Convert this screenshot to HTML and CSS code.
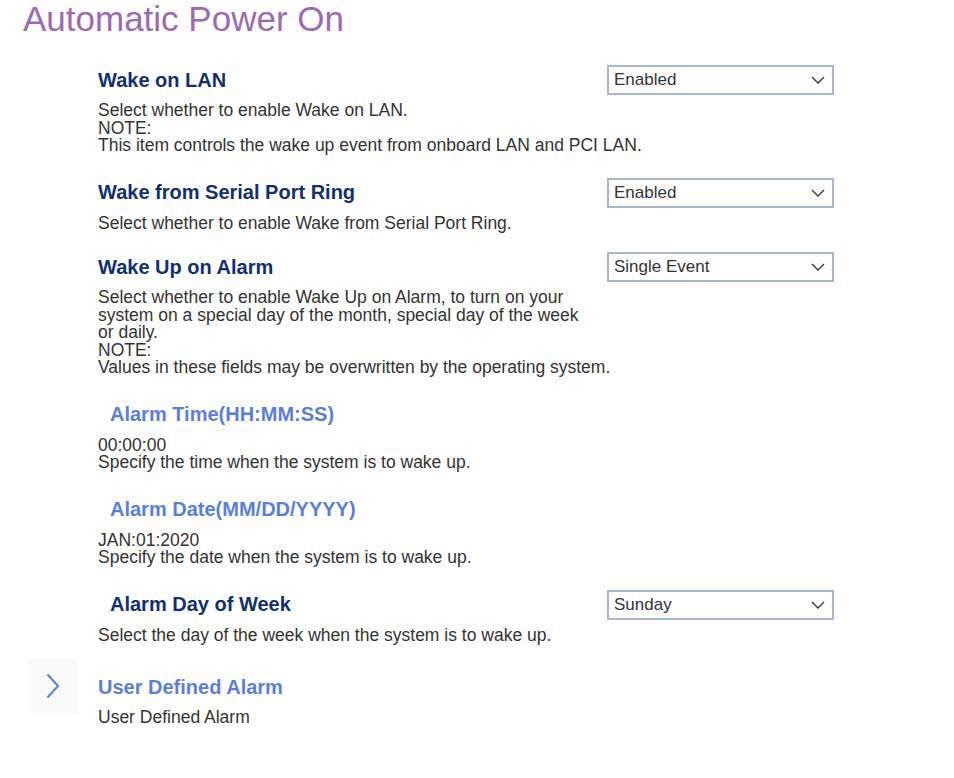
FILE: index.html
```html
<!DOCTYPE html>
<html>
<head>
<meta charset="utf-8">
<link rel="stylesheet" href="styles.css">
</head>
<body>
<h1 class="title">Automatic Power On</h1>
<div class="items">
  <div class="item">
    <div class="row">
      <div class="label">Wake on LAN</div>
      <div class="select"><span>Enabled</span><svg class="caret" viewBox="0 0 14 8" width="14" height="8"><path d="M1 1 L7 7 L13 1" fill="none" stroke="#333" stroke-width="1.3"/></svg></div>
    </div>
    <div class="desc">Select whether to enable Wake on LAN.<br>NOTE:<br>This item controls the wake up event from onboard LAN and PCI LAN.</div>
  </div>
  <div class="item tight">
    <div class="row">
      <div class="label">Wake from Serial Port Ring</div>
      <div class="select"><span>Enabled</span><svg class="caret" viewBox="0 0 14 8" width="14" height="8"><path d="M1 1 L7 7 L13 1" fill="none" stroke="#333" stroke-width="1.3"/></svg></div>
    </div>
    <div class="desc">Select whether to enable Wake from Serial Port Ring.</div>
  </div>
  <div class="item">
    <div class="row">
      <div class="label">Wake Up on Alarm</div>
      <div class="select"><span>Single Event</span><svg class="caret" viewBox="0 0 14 8" width="14" height="8"><path d="M1 1 L7 7 L13 1" fill="none" stroke="#333" stroke-width="1.3"/></svg></div>
    </div>
    <div class="desc">Select whether to enable Wake Up on Alarm, to turn on your<br>system on a special day of the month, special day of the week<br>or daily.<br>NOTE:<br>Values in these fields may be overwritten by the operating system.</div>
  </div>
  <div class="item sub">
    <div class="row">
      <div class="label link">Alarm Time(HH:MM:SS)</div>
    </div>
    <div class="desc">00:00:00<br>Specify the time when the system is to wake up.</div>
  </div>
  <div class="item sub">
    <div class="row">
      <div class="label link">Alarm Date(MM/DD/YYYY)</div>
    </div>
    <div class="desc">JAN:01:2020<br>Specify the date when the system is to wake up.</div>
  </div>
  <div class="item sub wide">
    <div class="row">
      <div class="label">Alarm Day of Week</div>
      <div class="select"><span>Sunday</span><svg class="caret" viewBox="0 0 14 8" width="14" height="8"><path d="M1 1 L7 7 L13 1" fill="none" stroke="#333" stroke-width="1.3"/></svg></div>
    </div>
    <div class="desc">Select the day of the week when the system is to wake up.</div>
  </div>
  <div class="item nav">
    <div class="chev"><svg viewBox="0 0 14 26" width="14" height="26"><path d="M1.5 1.5 L12 13 L1.5 24.5" fill="none" stroke="#5b7fd6" stroke-width="2"/></svg></div>
    <div class="row">
      <div class="label link">User Defined Alarm</div>
    </div>
    <div class="desc">User Defined Alarm</div>
  </div>
</div>
</body>
</html>
```

FILE: styles.css
```css
* { box-sizing: border-box; }
body {
  margin: 0;
  background: #fff;
  font-family: "Liberation Sans", Arial, sans-serif;
  color: #333;
}
.title {
  margin: 0;
  padding: 0 0 0 23px;
  font-size: 35px;
  font-weight: normal;
  color: #9d6ab0;
  line-height: 38px;
}
.items {
  padding: 27px 0 0 98px;
  width: 834px;
}
.item {
  position: relative;
  margin-bottom: 23px;
}
.item.tight { margin-bottom: 20px; }
.item.wide { margin-bottom: 28px; }
.row {
  display: flex;
  justify-content: space-between;
  align-items: center;
  min-height: 30px;
}
.label {
  font-size: 20px;
  font-weight: bold;
  color: #12306b;
}
.sub .label { padding-left: 12px; }
.link { color: #5b7fd6; }
.select {
  width: 227px;
  height: 30px;
  border: 2px solid #a8b6cf;
  display: flex;
  align-items: center;
  justify-content: space-between;
  padding: 0 7px 0 5px;
  font-size: 17px;
  color: #333;
}
.caret { display: block; }
.desc {
  margin-top: 7px;
  font-size: 17.5px;
  line-height: 17.5px;
  color: #333;
}
.nav .chev {
  position: absolute;
  left: -70px;
  top: -13px;
  width: 50px;
  height: 54px;
  background: #fafafa;
  display: flex;
  align-items: center;
  justify-content: center;
}
```
